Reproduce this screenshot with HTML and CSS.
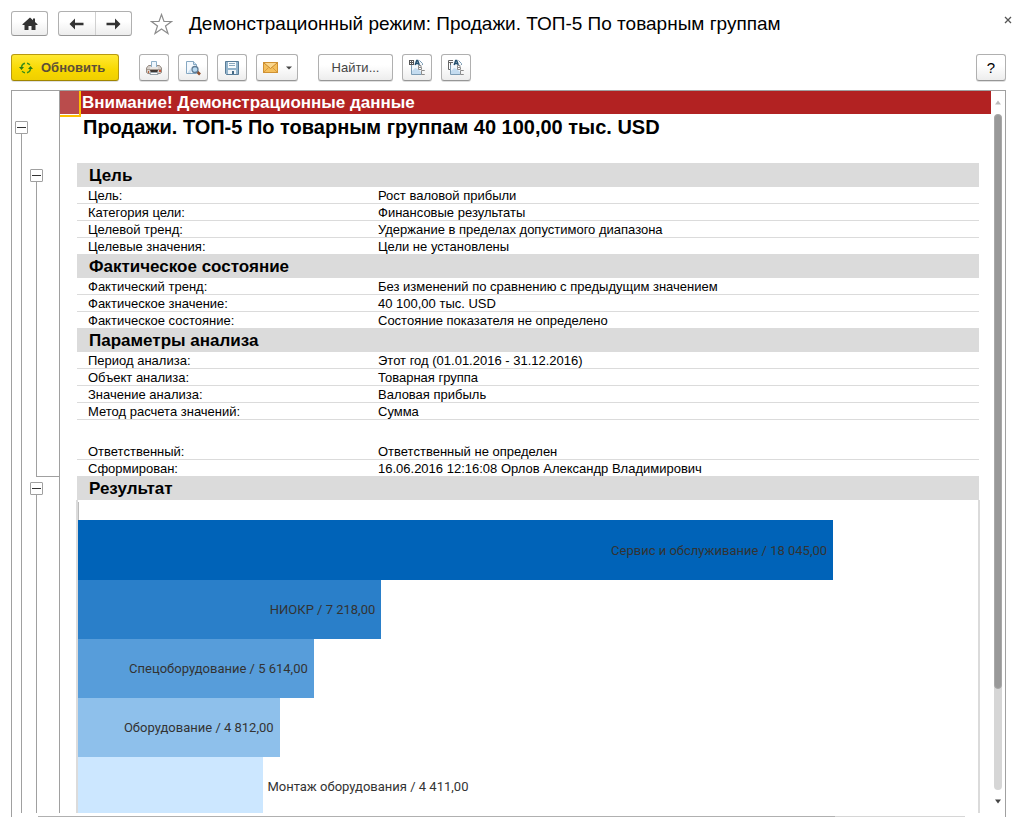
FILE: index.html
```html
<!DOCTYPE html>
<html lang="ru">
<head>
<meta charset="utf-8">
<title>Демонстрационный режим: Продажи. ТОП-5 По товарным группам</title>
<link rel="stylesheet" href="styles.css">
</head>
<body>
<div class="window">
  <header class="titlebar">
    <button class="btn btn-home" aria-label="Начальная страница">
      <svg width="16" height="14" viewBox="0 0 16 14"><path d="M8 0.5 0.5 7.3V8H2.5V13H6.5V9H9.5V13H13.5V8H15.5V7.3L13 5V1.5H11V3.2Z" fill="#333"/></svg>
    </button>
    <div class="nav">
      <button class="nav-btn" aria-label="Назад"><svg width="15" height="12" viewBox="0 0 15 12"><path d="M0.5 6 6 0.5V4.7H14.5V7.3H6V11.5Z" fill="#333"/></svg></button>
      <button class="nav-btn" aria-label="Вперед"><svg width="15" height="12" viewBox="0 0 15 12"><path d="M14.5 6 9 0.5V4.7H0.5V7.3H9V11.5Z" fill="#333"/></svg></button>
    </div>
    <button class="star" aria-label="В избранное">
      <svg width="23" height="22" viewBox="0 0 23 22"><path d="M11.5 1.5 14 8.5H21.5L15.5 13 18 20.5 11.5 16 5 20.5 7.5 13 1.5 8.5H9Z" fill="#fff" stroke="#8c8c8c" stroke-width="1.2"/></svg>
    </button>
    <h1 class="title">Демонстрационный режим: Продажи. ТОП-5 По товарным группам</h1>
    <button class="close" aria-label="Закрыть"><svg width="8" height="8" viewBox="0 0 8 8"><path d="M1 1 7 7M7 1 1 7" stroke="#555" stroke-width="1.3"/></svg></button>
  </header>

  <div class="toolbar">
    <button class="btn btn-refresh">
      <svg width="14" height="12" viewBox="0 0 14 12"><g fill="none" stroke="#3f8f1a" stroke-width="1.5"><path d="M2.5 6V5Q3 1.8 6 1.3M8 1.3Q10 1.5 10.8 3"/><path d="M11.5 6V7Q11 10.2 8 10.7M6 10.7Q4 10.5 3.2 9"/></g><path d="M0 5H5L2.5 8ZM9 7H14L11.5 4Z" fill="#2f7d12"/></svg>
      <span>Обновить</span>
    </button>
    <div class="group">
      <button class="btn btn-icon" aria-label="Печать">
        <svg width="16" height="16" viewBox="0 0 16 16"><path d="M2.5 5.5H13.5L15.5 8V12.5L14 13.5H2L0.5 12.5V8Z" fill="#d6cfc9" stroke="#958a82"/><path d="M5.500 7.500V1.500H10.500V7.500" fill="#eef6fc" stroke="#8fb0c8"/><path d="M4 7H12V9H4Z" fill="#e9e5e1"/><path d="M1 9.500H15" stroke="#a99d94"/><path d="M4 10H12L11 13H5Z" fill="#3f3733"/><path d="M4.500 12.500H11.500L12 14.500H4Z" fill="#fff" stroke="#98a3ab"/><rect x="2" y="11" width="1" height="2" fill="#b8643f"/><rect x="13" y="10" width="2" height="2" fill="#c8583a"/></svg>
      </button>
      <button class="btn btn-icon" aria-label="Просмотр">
        <svg width="16" height="16" viewBox="0 0 16 16"><path d="M1.500 1.500H8.500L11.500 4.500V13.500H1.500Z" fill="#f4f9fe" stroke="#86a8c2"/><path d="M8.500 1.500V4.500H11.500" fill="#cfe2f2" stroke="#86a8c2"/><path d="M3 12 6 8V13H3Z" fill="#d0e4f4"/><path d="M12 11.500 15 14.500" stroke="#8d4f2e" stroke-width="2.600"/><circle cx="10" cy="9.500" r="3" fill="#b9daf2" stroke="#607d96" stroke-width="1.300"/></svg>
      </button>
      <button class="btn btn-icon" aria-label="Сохранить">
        <svg width="16" height="16" viewBox="0 0 16 16"><path d="M1.500 1.500H14.500V14.500H2.500L1.500 13.500Z" fill="#93b4cc" stroke="#587c98"/><rect x="4" y="2" width="8" height="6" fill="#f8fbfd"/><path d="M5 3.500H11M5 5.500H11" stroke="#8aa8bd"/><rect x="4" y="10" width="8" height="4" fill="#f1f5f8"/><rect x="8" y="11" width="2" height="3" fill="#446a86"/></svg>
      </button>
      <button class="btn btn-mail" aria-label="Отправить">
        <svg width="15" height="12" viewBox="0 0 15 12"><rect x="0.500" y="0.500" width="14" height="10" fill="#f4bf5c" stroke="#cf9132"/><path d="M1 1 7.500 6.500 14 1" fill="#fad78e" stroke="#c98a2e"/><path d="M1 10 5.500 5.500M14 10 9.500 5.500" stroke="#d89b40"/></svg>
        <svg width="6" height="4" viewBox="0 0 6 4"><path d="M0 0.500H6L3 3.500Z" fill="#444"/></svg>
      </button>
    </div>
    <div class="group">
      <button class="btn btn-find">Найти...</button>
      <button class="btn btn-icon" aria-label="Развернуть группы">
        <svg width="17" height="17" viewBox="0 0 17 17"><path d="M2.500 5V15.500H12.500V4.500L9.500 1.500H6Z" fill="#f3f8fc"/><path d="M3 12 6 9 9 10 12 13V15H3Z" fill="#c4dcf0"/><path d="M2.500 6V15.500H12.500M10.500 1.500 13.500 4.500V6" fill="none" stroke="#7d9cb4"/><path d="M0.500 1.500H5M0.500 3.500H5M0.500 5.500H5M0.500 1V6M2.500 1V6M4.500 1V6" stroke="#555"/><path d="M6.200 6 7.700 1.500H8.700L10.200 6M7 4.500H9.500" fill="none" stroke="#24506f" stroke-width="1.500"/><path d="M9.500 6.500H12V8.500H9.500V6.500M9.500 8.500H12.500V10.500H9.500V8.500" fill="#fff" stroke="#8c8c8c"/><path d="M15.500 12V11.500H12.500V15.500H15.500V15" fill="none" stroke="#8c8c8c"/></svg>
      </button>
      <button class="btn btn-icon" aria-label="Свернуть группы">
        <svg width="17" height="17" viewBox="0 0 17 17"><path d="M2.500 5V15.500H12.500V4.500L9.500 1.500H6Z" fill="#f3f8fc"/><path d="M3 12 6 9 9 10 12 13V15H3Z" fill="#c4dcf0"/><path d="M2.500 6V15.500H12.500M10.500 1.500 13.500 4.500V6" fill="none" stroke="#7d9cb4"/><path d="M5 1.500H0.500V10.500H2M0.500 3.500H5M2.500 3V6" fill="none" stroke="#666"/><path d="M6.200 6 7.700 1.500H8.700L10.200 6M7 4.500H9.500" fill="none" stroke="#24506f" stroke-width="1.500"/><path d="M9.500 6.500H12V8.500H9.500V6.500M9.500 8.500H12.500V10.500H9.500V8.500" fill="#fff" stroke="#8c8c8c"/><path d="M15.500 12V11.500H12.500V15.500H15.500V15" fill="none" stroke="#8c8c8c"/></svg>
      </button>
    </div>
    <button class="btn btn-icon btn-help">?</button>
  </div>

  <main class="report">
    <div class="viewport">
      <div class="tree">
        <div class="level level-outer">
          <button class="toggle" aria-label="Свернуть"></button>
          <div class="line line-rest"></div>
        </div>
        <div class="level level-inner">
          <button class="toggle" aria-label="Свернуть"></button>
          <div class="line line-closed"></div>
          <button class="toggle" aria-label="Свернуть"></button>
          <div class="line line-rest"></div>
        </div>
      </div>

      <div class="sheet">
        <div class="alert"><span class="cell"></span>Внимание! Демонстрационные данные</div>
        <h2 class="report-title">Продажи. ТОП-5 По товарным группам 40 100,00 тыс. USD</h2>
        <div class="sections">
          <h3 class="section">Цель</h3>
          <table class="facts">
            <tr><th>Цель:</th><td>Рост валовой прибыли</td></tr>
            <tr><th>Категория цели:</th><td>Финансовые результаты</td></tr>
            <tr><th>Целевой тренд:</th><td>Удержание в пределах допустимого диапазона</td></tr>
            <tr class="last"><th>Целевые значения:</th><td>Цели не установлены</td></tr>
          </table>
          <h3 class="section">Фактическое состояние</h3>
          <table class="facts">
            <tr><th>Фактический тренд:</th><td>Без изменений по сравнению с предыдущим значением</td></tr>
            <tr><th>Фактическое значение:</th><td>40 100,00 тыс. USD</td></tr>
            <tr class="last"><th>Фактическое состояние:</th><td>Состояние показателя не определено</td></tr>
          </table>
          <h3 class="section">Параметры анализа</h3>
          <table class="facts">
            <tr><th>Период анализа:</th><td>Этот год (01.01.2016 - 31.12.2016)</td></tr>
            <tr><th>Объект анализа:</th><td>Товарная группа</td></tr>
            <tr><th>Значение анализа:</th><td>Валовая прибыль</td></tr>
            <tr><th>Метод расчета значений:</th><td>Сумма</td></tr>
          </table>
          <table class="facts facts-author">
            <tr><th>Ответственный:</th><td>Ответственный не определен</td></tr>
            <tr class="last"><th>Сформирован:</th><td>16.06.2016 12:16:08 Орлов Александр Владимирович</td></tr>
          </table>
          <h3 class="section">Результат</h3>
          <div class="chart">
            <div class="axis"></div>
            <div class="row row-first"><div class="bar bar-1" style="width:83.9%">Сервис и обслуживание / 18 045,00</div></div>
            <div class="row"><div class="bar bar-2" style="width:33.7%">НИОКР / 7 218,00</div></div>
            <div class="row"><div class="bar bar-3" style="width:26.2%">Спецоборудование / 5 614,00</div></div>
            <div class="row"><div class="bar bar-4" style="width:22.4%">Оборудование / 4 812,00</div></div>
            <div class="row"><div class="bar bar-5" style="width:20.6%"></div><span class="outside">Монтаж оборудования / 4 411,00</span></div>
          </div>
        </div>
      </div>

      <div class="vscroll">
        <svg width="6" height="5" viewBox="0 0 6 5"><path d="M3 0.500 6 4.500H0Z" fill="#bbb"/></svg>
        <div class="track"><div class="thumb"></div></div>
        <svg width="6" height="5" viewBox="0 0 6 5"><path d="M0 0.500H6L3 4.500Z" fill="#444"/></svg>
      </div>
    </div>
    <div class="hscroll"><div class="hthumb"></div></div>
  </main>
</div>
</body>
</html>
```
FILE: styles.css
```css
* { box-sizing: border-box; }

body {
  margin: 0;
  background: #fff;
  color: #000;
  font-family: "Liberation Sans", Arial, sans-serif;
  font-size: 13px;
}

h1, h2, h3 { margin: 0; }

button {
  margin: 0;
  padding: 0;
  border: 0;
  background: none;
  font-family: inherit;
  color: inherit;
}

svg { display: block; flex: none; }

.window {
  display: flex;
  flex-direction: column;
  height: 100vh;
  padding: 11px 16px 0 11px;
  overflow: hidden;
}

/* Title bar */
.titlebar {
  display: flex;
  align-items: center;
  height: 25px;
  flex: none;
}

.btn, .nav {
  display: flex;
  align-items: center;
  justify-content: center;
  border: 1px solid #b0b0b0;
  border-bottom-color: #969696;
  border-radius: 3px;
  background: linear-gradient(#fff 40%, #ededed);
}

.btn-home { width: 37px; height: 25px; }

.nav {
  width: 74px;
  height: 25px;
  margin-left: 10px;
}

.nav-btn {
  display: flex;
  flex: 1;
  height: 100%;
  align-items: center;
  justify-content: center;
}

.nav-btn + .nav-btn { border-left: 1px solid #d0d0d0; }

.star { margin-left: 18px; }

.title {
  flex: 1;
  margin-left: 16px;
  font-size: 19px;
  line-height: 27px;
  font-weight: 400;
  white-space: nowrap;
}

.close { align-self: flex-start; margin: 5px -6px 0 0; }

/* Toolbar */
.toolbar {
  display: flex;
  flex: none;
  gap: 20px;
  margin-top: 18px;
}

.toolbar .btn { height: 27px; box-shadow: 0 1px 0 #e0e0e0; }

.group { display: flex; gap: 9px; }

.toolbar .btn-icon { width: 30px; }

.btn-refresh {
  width: 108px;
  justify-content: flex-start;
  gap: 8px;
  padding-left: 7px;
  border-color: #b89a10;
  border-bottom-color: #a08500;
  background: linear-gradient(#ffe933, #f8d800 60%, #efcf00);
  color: #5c4f38;
  font-size: 13px;
  font-weight: 700;
}

.btn-mail { width: 42px; gap: 8px; }

.btn-find { width: 75px; font-size: 13px; color: #444; }

.btn-help { margin-left: auto; font-size: 15px; }

/* Report frame */
.report {
  display: flex;
  flex: 1;
  flex-direction: column;
  min-height: 0;
  margin-top: 9px;
  border: 1px solid #a0a0a0;
  border-bottom: 0;
}

.viewport {
  display: flex;
  flex: 1;
  min-height: 0;
  overflow: hidden;
}

.tree {
  display: flex;
  flex: none;
  width: 48px;
  border-right: 1px solid #a0a0a0;
}

.level { display: flex; flex-direction: column; }
.level-outer { width: 18px; padding: 30px 0 0 3px; }
.level-inner { flex: 1; padding-top: 78px; }

.toggle {
  display: flex;
  flex: none;
  width: 13px;
  height: 13px;
  align-items: center;
  justify-content: center;
  border: 1px solid #a0a0a0;
  border-radius: 1px;
}

.toggle::before {
  content: "";
  width: 9px;
  height: 1px;
  background: #333;
}

.line { margin-left: 6px; border-left: 1px solid #a0a0a0; }
.line-rest { flex: 1; }

.line-closed {
  height: 295px;
  margin-bottom: 5px;
  border-bottom: 1px solid #a0a0a0;
}

/* Sheet */
.sheet { flex: 1; min-width: 0; }

.alert {
  position: relative;
  height: 23px;
  padding-left: 22px;
  background: #b22222;
  color: #fff;
  font-size: 17px;
  line-height: 23px;
  font-weight: 700;
}

.cell {
  position: absolute;
  top: 0;
  left: 0;
  width: 21px;
  height: 26px;
  border: solid #ffc000;
  border-width: 0 2px 2px 0;
  background: linear-gradient(#ba4c4c 23px, #fff 23px);
}

.report-title {
  padding-left: 23px;
  font-size: 20px;
  line-height: 26px;
  font-weight: 700;
  white-space: nowrap;
}

.sections { padding: 23px 12px 0 17px; }

.section {
  height: 24px;
  padding-left: 12px;
  background: #dbdbdb;
  font-size: 17px;
  line-height: 26px;
  font-weight: 700;
}

.facts {
  width: 100%;
  border-spacing: 0;
  table-layout: fixed;
  line-height: 15px;
}

.facts-author { margin-top: 23px; }

.facts th, .facts td {
  padding: 1px 0 0;
  border-bottom: 1px solid #dbdbdb;
  font-weight: 400;
  text-align: left;
}

.facts th { width: 301px; padding-left: 11px; }
.facts .last > * { border-bottom: 0; }

/* Chart */
.chart {
  margin: 0 -1px;
  padding-top: 2px;
  border: solid #dbdbdb;
  border-width: 0 2px;
  color: #333;
  font-family: Roboto, sans-serif;
  font-size: 13px;
}

.axis {
  height: 18px;
  border-left: 1px solid #bbb;
}

.row { display: flex; height: 59px; align-items: stretch; }
.row-first { height: 60px; }

.bar {
  display: flex;
  flex: none;
  align-items: center;
  justify-content: flex-end;
  padding-right: 6px;
  white-space: nowrap;
}

.bar-1 { background: #0063b8; }
.bar-2 { background: #2a7fc9; }
.bar-3 { background: #579dda; }
.bar-4 { background: #8ec0eb; }
.bar-5 { background: #cce7ff; }

.outside { align-self: center; padding-left: 4px; }

/* Scrollbars */
.vscroll {
  display: flex;
  flex: none;
  flex-direction: column;
  width: 14px;
  align-items: center;
  padding: 9px 0;
}

.track {
  flex: 1;
  width: 8px;
  margin: 9px 0;
  border-radius: 4px;
  background: #d6d6d6;
}

.thumb {
  height: 85%;
  border: 1px solid #a8a8a8;
  border-radius: 4px;
  background: #999;
}

.hscroll {
  flex: none;
  height: 4px;
  padding: 3px 40px 0 26px;
}

.hthumb {
  height: 1px;
  background: linear-gradient(90deg, #b0b0b0 86%, #d6d6d6 86%);
}
```
